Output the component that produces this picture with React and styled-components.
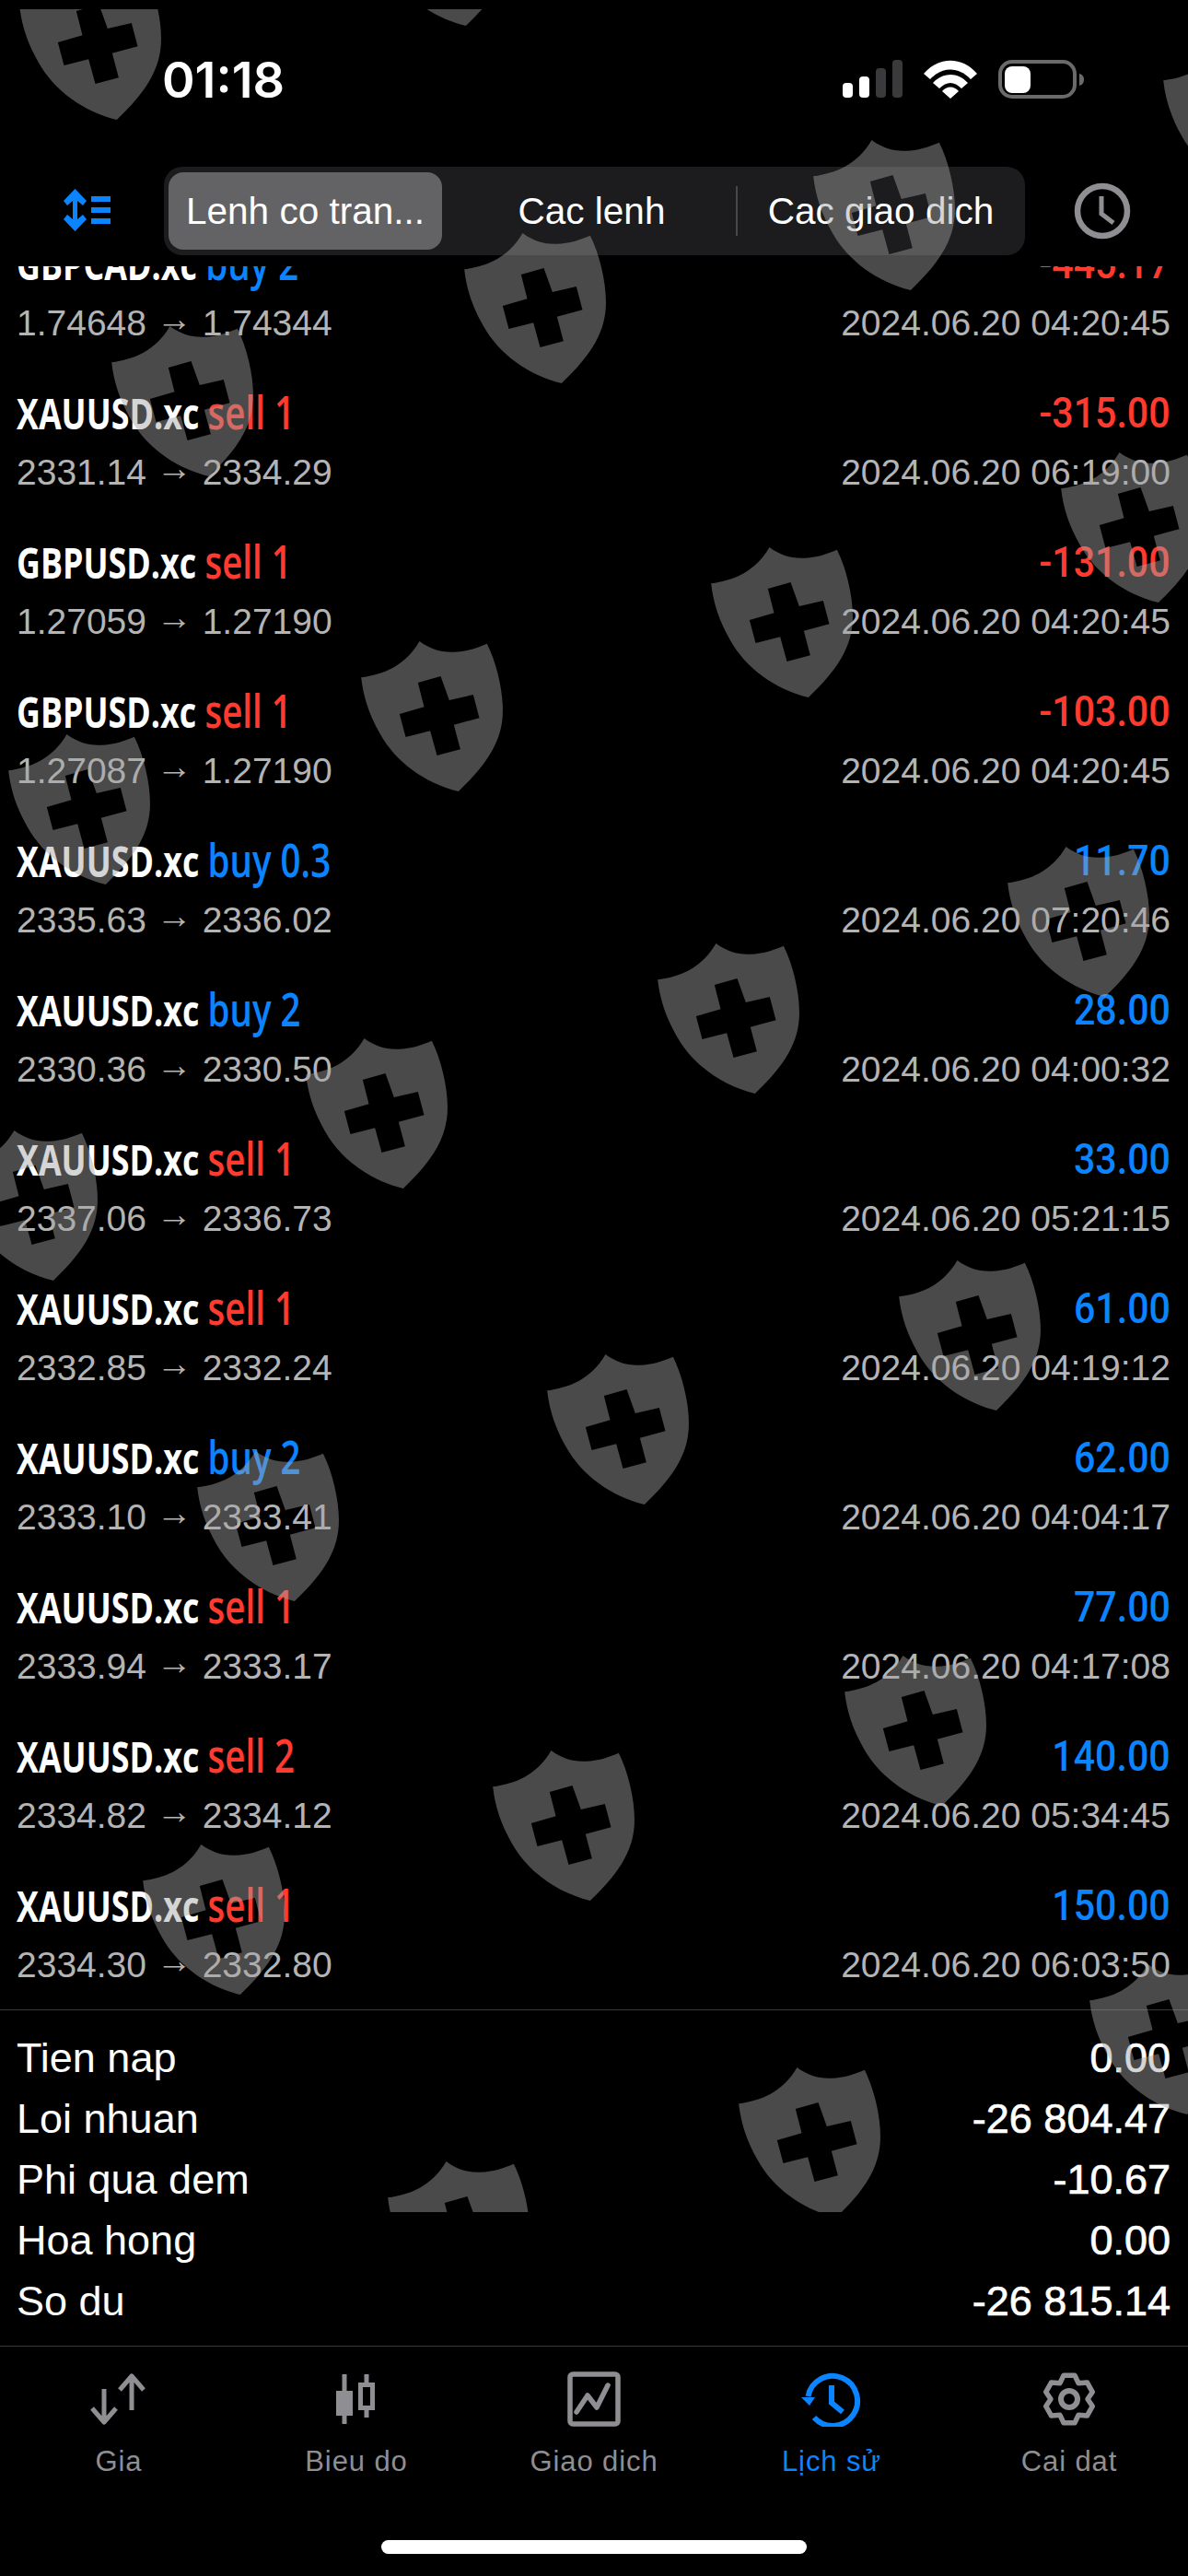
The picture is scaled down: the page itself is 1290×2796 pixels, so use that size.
import React from "react";
import styled, { createGlobalStyle } from "styled-components";

const GlobalStyle = createGlobalStyle`
  html, body {
    margin: 0;
    padding: 0;
    background: #000;
  }
  * {
    box-sizing: border-box;
  }
`;

const Page = styled.div`
  position: relative;
  width: 1290px;
  height: 2796px;
  overflow: hidden;
  background: #000;
  color: #fff;
  font-family: "Liberation Sans", Arial, sans-serif;
`;

const StatusBar = styled.div`
  height: 181px;
  padding: 65px 113px 0 176px;
  display: flex;
  align-items: flex-start;
  justify-content: space-between;
`;

const Clock = styled.div`
  font-family: Inter, "Liberation Sans", sans-serif;
  font-size: 54px;
  font-weight: 600;
  line-height: 44px;
  letter-spacing: 0;
`;

const StatusIcons = styled.div`
  display: flex;
  align-items: flex-start;
  gap: 23px;
`;

const Toolbar = styled.div`
  height: 96px;
  padding-left: 69px;
  display: flex;
  align-items: center;
`;

const SortIcon = styled.svg`
  width: 52px;
  height: 46px;
  flex: none;
  margin-top: -2px;
`;

const Segments = styled.div`
  width: 935px;
  height: 96px;
  margin-left: 57px;
  padding: 6px 5px;
  display: grid;
  grid-template-columns: 297px 320px 1fr;
  background: #1c1c1e;
  border-radius: 20px;
`;

const Segment = styled.div`
  display: flex;
  align-items: center;
  justify-content: center;
  font-size: 40.5px;
  white-space: nowrap;
  border-radius: 16px;
  background: ${(p) => (p.$active ? "#636366" : "transparent")};
  padding-left: ${(p) => (p.$active ? "0" : "5px")};
  position: relative;
  ${(p) =>
    p.$divider &&
    `&::after {
      content: "";
      position: absolute;
      right: -1px;
      top: 15px;
      bottom: 15px;
      width: 2px;
      background: #48484a;
    }`}
`;

const HistoryButton = styled.svg`
  width: 62px;
  height: 62px;
  margin-left: 53px;
  flex: none;
`;

const DealList = styled.div`
  height: 1892px;
  margin-top: 12px;
  overflow: hidden;
`;

const DealRows = styled.div`
  margin-top: -52px;
`;

const DealRow = styled.div`
  height: 162px;
  padding: 23px 19px 0 18px;
`;

const DealLine = styled.div`
  display: flex;
  justify-content: space-between;
  align-items: center;
`;

const DealTitle = styled.div`
  font-family: "Open Sans", sans-serif;
  font-size: 47px;
  font-weight: 700;
  line-height: 50px;
  white-space: nowrap;
  transform: scaleX(0.762);
  transform-origin: left center;
`;

const Side = styled.span`
  font-size: 50.5px;
  font-weight: 600;
  color: ${(p) => (p.$kind === "buy" ? "#0a84ff" : "#ff3b30")};
`;

const Profit = styled.div`
  font-family: Roboto, sans-serif;
  font-size: 47px;
  font-weight: 500;
  line-height: 50px;
  white-space: nowrap;
  transform: scaleX(0.875);
  transform-origin: right center;
  color: ${(p) => (p.$loss ? "#ff3b30" : "#0a84ff")};
`;

const SubLine = styled(DealLine)`
  margin-top: 17px;
  font-size: 39px;
  line-height: 46px;
  color: #b4b4b4;
`;

const Arrow = styled.span`
  line-height: 0;
  vertical-align: 5px;
`;

const Summary = styled.div`
  padding: 19px 19px 15px 18px;
  border-top: 1px solid #38383a;
  border-bottom: 1px solid #38383a;
`;

const SummaryRow = styled.div`
  height: 66px;
  display: flex;
  align-items: center;
  justify-content: space-between;
  font-size: 45px;
`;

const SummaryValue = styled.span`
  -webkit-text-stroke: 0.7px #fff;
`;

const TabBar = styled.div`
  padding-top: 27px;
  display: grid;
  grid-template-columns: repeat(5, 1fr);
`;

const Tab = styled.div`
  display: flex;
  flex-direction: column;
  align-items: center;
  color: ${(p) => (p.$active ? "#0a84ff" : "#8e8e93")};
`;

const TabIcon = styled.svg`
  width: 70px;
  height: 60px;
`;

const TabLabel = styled.div`
  margin-top: 18px;
  font-size: 31px;
  line-height: 40px;
  letter-spacing: 0.9px;
`;

const HomeIndicator = styled.div`
  width: 462px;
  height: 15px;
  margin: 65px auto 0;
  background: #fff;
  border-radius: 8px;
`;

const Watermark = styled.div`
  position: absolute;
  top: 10px;
  left: 0;
  width: 1290px;
  height: 2391px;
  overflow: hidden;
  pointer-events: none;
`;

const Shield = styled.svg`
  position: absolute;
  left: ${(p) => p.$x}px;
  top: ${(p) => p.$y - 10}px;
  width: 155px;
  height: 163px;
  fill: #a4a4a4;
  opacity: 0.45;
`;

const deals = [
  ["GBPCAD.xc", "buy", "2", "-445.17", "1.74648", "1.74344", "04:20:45"],
  ["XAUUSD.xc", "sell", "1", "-315.00", "2331.14", "2334.29", "06:19:00"],
  ["GBPUSD.xc", "sell", "1", "-131.00", "1.27059", "1.27190", "04:20:45"],
  ["GBPUSD.xc", "sell", "1", "-103.00", "1.27087", "1.27190", "04:20:45"],
  ["XAUUSD.xc", "buy", "0.3", "11.70", "2335.63", "2336.02", "07:20:46"],
  ["XAUUSD.xc", "buy", "2", "28.00", "2330.36", "2330.50", "04:00:32"],
  ["XAUUSD.xc", "sell", "1", "33.00", "2337.06", "2336.73", "05:21:15"],
  ["XAUUSD.xc", "sell", "1", "61.00", "2332.85", "2332.24", "04:19:12"],
  ["XAUUSD.xc", "buy", "2", "62.00", "2333.10", "2333.41", "04:04:17"],
  ["XAUUSD.xc", "sell", "1", "77.00", "2333.94", "2333.17", "04:17:08"],
  ["XAUUSD.xc", "sell", "2", "140.00", "2334.82", "2334.12", "05:34:45"],
  ["XAUUSD.xc", "sell", "1", "150.00", "2334.30", "2332.80", "06:03:50"],
];

const totals = [
  ["Tien nap", "0.00"],
  ["Loi nhuan", "-26 804.47"],
  ["Phi qua dem", "-10.67"],
  ["Hoa hong", "0.00"],
  ["So du", "-26 815.14"],
];

const shields = [
  [21, -33], [400, -135], [1263, 48], [883, 152], [504, 253], [121, 354],
  [772, 594], [392, 696], [1152, 491], [9, 797], [1094, 919], [714, 1024],
  [332, 1127], [-48, 1227], [976, 1368], [594, 1470], [214, 1575],
  [917, 1797], [535, 1900], [155, 2002], [1183, 2132], [802, 2244], [421, 2346],
];

const shieldPath =
  "M93 226C165 216 235 190 283 108C320 135 355 145 395 143C435 142 470 130 503 116C540 190 562 300 552 370C540 460 480 530 410 597C300 570 205 500 155 410C120 350 100 290 93 226Z" +
  "M278 243L352 222L380 300L458 282L478 358L395 380L416 460L340 480L318 400L238 420L218 345L298 322Z";

// gear outline with six flat teeth
const gearPoints = () => {
  const pts = [];
  for (let i = 0; i < 6; i++) {
    const a = -90 + i * 60;
    [[-30, 20], [-13, 26.5], [13, 26.5], [30, 20]].forEach(([d, r]) => {
      const t = ((a + d) * Math.PI) / 180;
      pts.push(`${(35 + r * Math.cos(t)).toFixed(1)},${(30 + r * Math.sin(t)).toFixed(1)}`);
    });
  }
  return pts.join(" ");
};

function PriceIcon() {
  return (
    <TabIcon viewBox="0 0 70 60" fill="none" stroke="currentColor" strokeWidth="5" strokeLinejoin="round">
      <path d="M19 19V55M6 40L19 55L32 40" />
      <path d="M49 5V42M36 20L49 5L62 20" />
    </TabIcon>
  );
}

function ChartIcon() {
  return (
    <TabIcon viewBox="0 0 70 60" fill="currentColor">
      <path d="M19.5 3H24.5V57H19.5ZM13 21H31V48H13Z" />
      <path d="M43.5 3H48.5V50H43.5Z" />
      <path d="M39.5 14.5H52.5V39.5H39.5Z" fill="#000" stroke="currentColor" strokeWidth="5" />
    </TabIcon>
  );
}

function TradeIcon() {
  return (
    <TabIcon viewBox="0 0 70 60" fill="none" stroke="currentColor" strokeWidth="5.5" strokeLinejoin="round" strokeLinecap="round">
      <rect x="9" y="3" width="52" height="54" rx="3" />
      <path d="M16 44L28 26L38 39L50 15" />
    </TabIcon>
  );
}

function HistoryIcon() {
  return (
    <TabIcon viewBox="0 0 70 60" fill="none" stroke="currentColor" strokeWidth="6">
      <path d="M9.5 27A27 27 0 1 1 16 50" />
      <path d="M35 15V34L47 44" />
      <path d="M2 28H17L11 37Z" fill="currentColor" stroke="none" />
    </TabIcon>
  );
}

function SettingsIcon() {
  return (
    <TabIcon viewBox="0 0 70 60" fill="none" stroke="currentColor" strokeWidth="5.5" strokeLinejoin="round">
      <polygon points={gearPoints()} />
      <circle cx="35" cy="30" r="9" strokeWidth="6" />
    </TabIcon>
  );
}

const tabs = [
  ["Gia", PriceIcon],
  ["Bieu do", ChartIcon],
  ["Giao dich", TradeIcon],
  ["Lịch sử", HistoryIcon, true],
  ["Cai dat", SettingsIcon],
];

export default function App() {
  return (
    <Page>
      <GlobalStyle />
      <StatusBar>
        <Clock>01:18</Clock>
        <StatusIcons>
          <svg width="65" height="42" viewBox="0 0 65 42">
            <rect x="0" y="25" width="11" height="16" rx="4" fill="#fff" />
            <rect x="18" y="18" width="11" height="23" rx="4" fill="#fff" />
            <rect x="36" y="9" width="11" height="32" rx="4" fill="#3a3a3c" />
            <rect x="54" y="0" width="11" height="41" rx="4" fill="#3a3a3c" />
          </svg>
          <svg width="58" height="42" viewBox="0 0 58 42" fill="#fff">
            <path d="M0 15C16 -4 42 -4 58 15L51 21C38 7 20 7 7 21Z" />
            <path d="M10 25C21 13 37 13 48 25L41 31C33 23 25 23 17 31Z" />
            <path d="M20 34C25 28 33 28 38 34L29 42Z" />
          </svg>
          <svg width="93" height="42" viewBox="0 0 93 42">
            <rect x="2" y="2" width="81" height="38" rx="13" fill="none" stroke="#6a6a6a" strokeWidth="4" />
            <rect x="7" y="7" width="28" height="29" rx="8" fill="#fff" />
            <path d="M88 15C92 16 93 19 93 21C93 24 92 27 88 28Z" fill="#6a6a6a" />
          </svg>
        </StatusIcons>
      </StatusBar>

      <Toolbar>
        <SortIcon viewBox="0 0 52 46" fill="#0a84ff">
          <path d="M12.5 0L25 13L21 18L15 13V33L21 28L25 33L12.5 46L0 33L4 28L10 33V13L4 18L0 13Z" />
          <rect x="30" y="8" width="21" height="6" />
          <rect x="30" y="20" width="21" height="6" />
          <rect x="30" y="32" width="21" height="6" />
        </SortIcon>
        <Segments>
          <Segment $active>Lenh co tran...</Segment>
          <Segment $divider>Cac lenh</Segment>
          <Segment>Cac giao dich</Segment>
        </Segments>
        <HistoryButton viewBox="0 0 62 62" fill="none" stroke="#8e8e93" strokeWidth="6.5">
          <circle cx="31" cy="31" r="27" />
          <path d="M30 15V34L43 44" strokeWidth="5" />
        </HistoryButton>
      </Toolbar>

      <DealList>
        <DealRows>
          {deals.map(([symbol, side, lots, profit, open, close, time], i) => (
            <DealRow key={i}>
              <DealLine>
                <DealTitle>
                  {symbol} <Side $kind={side}>{side} {lots}</Side>
                </DealTitle>
                <Profit $loss={profit.startsWith("-")}>{profit}</Profit>
              </DealLine>
              <SubLine>
                <span>{open} <Arrow>→</Arrow> {close}</span>
                <span>2024.06.20 {time}</span>
              </SubLine>
            </DealRow>
          ))}
        </DealRows>
      </DealList>

      <Summary>
        {totals.map(([label, value]) => (
          <SummaryRow key={label}>
            <span>{label}</span>
            <SummaryValue>{value}</SummaryValue>
          </SummaryRow>
        ))}
      </Summary>

      <TabBar>
        {tabs.map(([label, Icon, active]) => (
          <Tab key={label} $active={active}>
            <Icon />
            <TabLabel>{label}</TabLabel>
          </Tab>
        ))}
      </TabBar>
      <HomeIndicator />

      <Watermark>
        {shields.map(([x, y], i) => (
          <Shield key={i} $x={x} $y={y} viewBox="93 108 464 489">
            <path d={shieldPath} fillRule="evenodd" />
          </Shield>
        ))}
      </Watermark>
    </Page>
  );
}
